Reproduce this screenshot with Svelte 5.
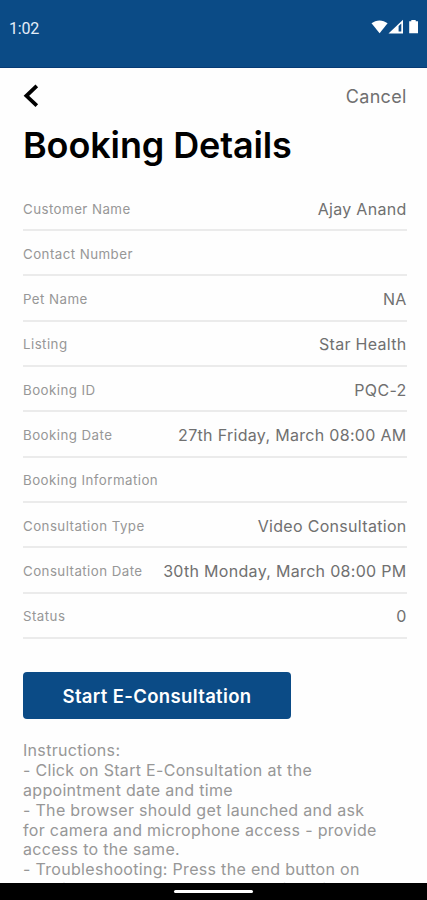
<script>
  const rows = [
    { label: 'Customer Name', value: 'Ajay Anand' },
    { label: 'Contact Number', value: '' },
    { label: 'Pet Name', value: 'NA' },
    { label: 'Listing', value: 'Star Health' },
    { label: 'Booking ID', value: 'PQC-2' },
    { label: 'Booking Date', value: '27th Friday, March 08:00 AM' },
    { label: 'Booking Information', value: '' },
    { label: 'Consultation Type', value: 'Video Consultation' },
    { label: 'Consultation Date', value: '30th Monday, March 08:00 PM' },
    { label: 'Status', value: '0' }
  ];
  const instructions = [
    'Instructions:',
    '- Click on Start E-Consultation at the',
    'appointment date and time',
    '- The browser should get launched and ask',
    'for camera and microphone access - provide',
    'access to the same.',
    '- Troubleshooting: Press the end button on',
    'the video call and start the call with this'
  ];
</script>

<div class="screen">
  <header class="status">
    <span class="time">1:02</span>
    <svg class="signals" width="50" height="16" viewBox="0 0 50 16" fill="#fff">
      <path d="M0.5 4.3C5 .4 12 .4 16.6 4.3L8.6 14.2Z" />
      <path d="M17.5 14.4 32 0.7V14.4Z" />
      <path d="M27.6 6.9 30.3 4.5V12.6H27.6Z" fill="#0b4b86" />
      <path d="M40.3 1H44.7V2.3H47V14.3H38.2V2.3H40.3Z" />
    </svg>
  </header>
  <main>
    <nav>
      <svg width="16" height="24" viewBox="0 0 16 24" fill="none" stroke="#000" stroke-width="3.8">
        <path d="M13.8 1.8 3.4 11.8 13.8 21.6" />
      </svg>
      <span class="cancel">Cancel</span>
    </nav>
    <h1>Booking Details</h1>
    <section class="details">
      {#each rows as row}
        <div class="row">
          <span class="label">{row.label}</span>
          <span class="value">{row.value}</span>
        </div>
      {/each}
    </section>
    <button>Start E-Consultation</button>
    <div class="instructions">
      {#each instructions as line}
        <div>{line}</div>
      {/each}
    </div>
  </main>
  <footer><span></span></footer>
</div>

<style>
  .screen {
    width: 427px;
    height: 900px;
    display: flex;
    flex-direction: column;
    overflow: hidden;
    background: #fefefe;
    font-family: Inter, sans-serif;
  }
  .status {
    flex: none;
    box-sizing: border-box;
    height: 68px;
    padding: 18px 6px 0 9px;
    display: flex;
    justify-content: space-between;
    align-items: flex-start;
    background: #0b4b86;
    border-bottom: 1px solid #073b75;
  }
  .time {
    font: 16px/21px Roboto, sans-serif;
    letter-spacing: -0.2px;
    color: #e4edf8;
  }
  .signals { margin-top: 1px; }
  main {
    flex: 1;
    min-height: 0;
    overflow: hidden;
    padding: 0 20px 0 23px;
  }
  nav {
    height: 56px;
    display: flex;
    justify-content: space-between;
    align-items: center;
  }
  .cancel {
    font-size: 18px;
    letter-spacing: 0.3px;
    padding-right: 0.4px;
    color: #707070;
  }
  h1 {
    margin: 0;
    font-size: 36px;
    line-height: 43px;
    font-weight: 600;
    letter-spacing: -0.12px;
    color: #000;
    white-space: nowrap;
  }
  .details { padding-top: 18.9px; }
  .row {
    box-sizing: border-box;
    height: 45.3px;
    padding-top: 2px;
    display: flex;
    justify-content: space-between;
    align-items: center;
    border-bottom: 2px solid #ebebeb;
    white-space: nowrap;
  }
  .label {
    font-size: 13.3px;
    letter-spacing: 0.45px;
    color: #979797;
  }
  .value {
    font-size: 16px;
    letter-spacing: 0.31px;
    padding-right: 0.4px;
    color: #707070;
  }
  button {
    display: block;
    width: 268px;
    height: 47px;
    margin: 33px 0 22.5px;
    padding: 2px 0 0;
    border: 0;
    border-radius: 4px;
    background: #0b4b86;
    color: #fff;
    font: 600 18.5px/22px Inter, sans-serif;
    letter-spacing: 0.35px;
  }
  .instructions {
    font-size: 16px;
    line-height: 19.8px;
    letter-spacing: 0.31px;
    color: #979797;
    white-space: nowrap;
  }
  footer {
    flex: none;
    height: 17px;
    display: flex;
    justify-content: center;
    align-items: center;
    background: #000;
  }
  footer span {
    width: 79px;
    height: 3px;
    border-radius: 2px;
    background: #fff;
  }
</style>
